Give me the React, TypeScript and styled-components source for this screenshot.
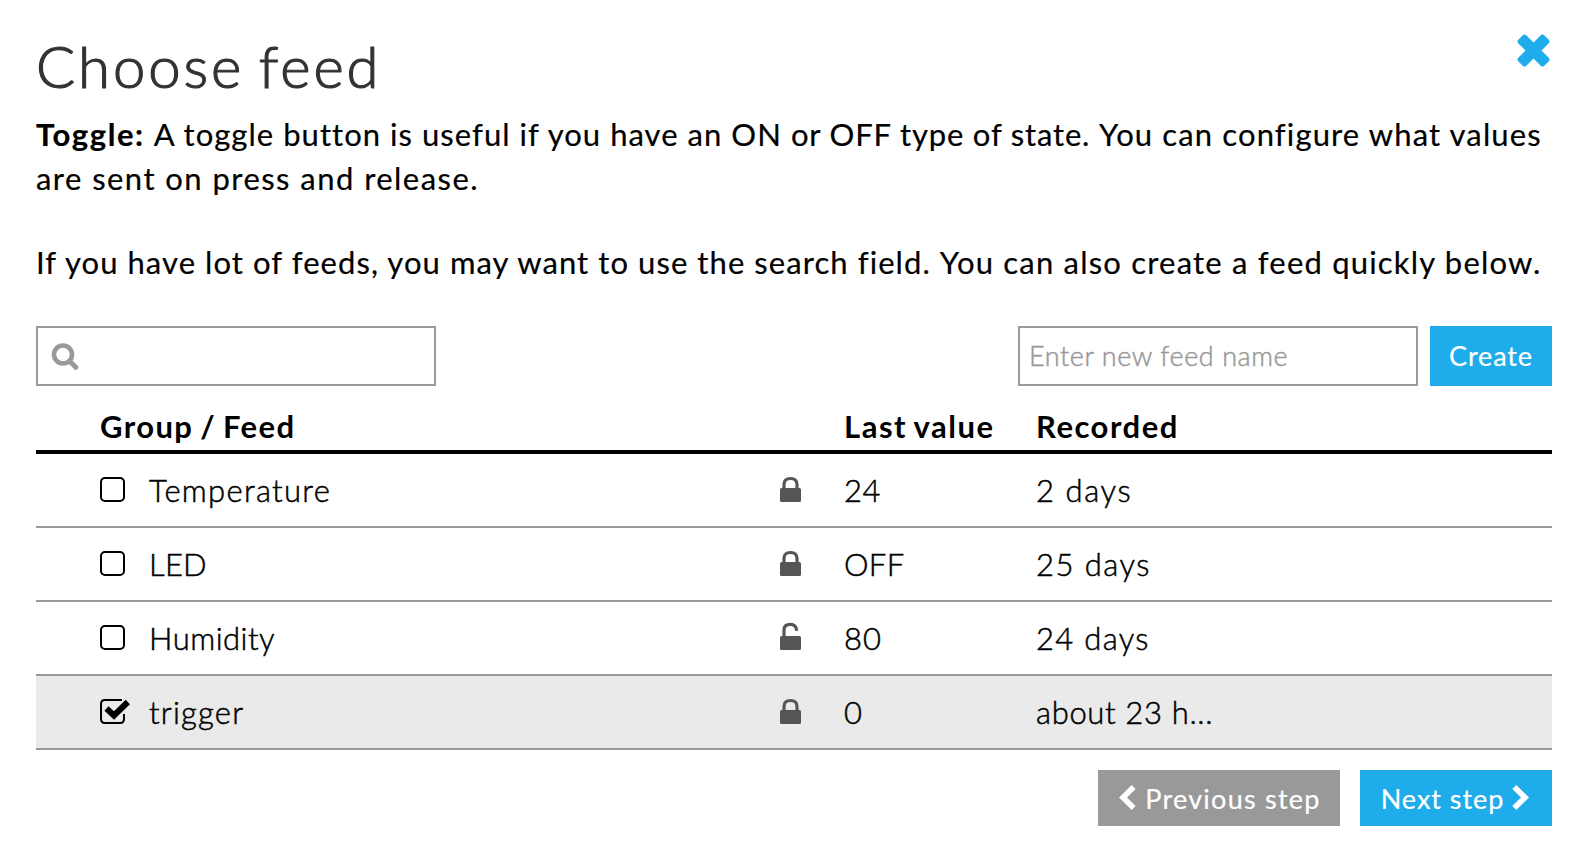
import React from "react";
import styled, { createGlobalStyle, css } from "styled-components";

const blue = "#1faceb";
const gray = "#999";

const GlobalStyle = createGlobalStyle`
  * { box-sizing: border-box; }
  body { margin: 0; background: #fff; color: #000; font-family: Lato, "Liberation Sans", sans-serif; }
`;

const Dialog = styled.main`
  width: 1582px;
  height: 858px;
  padding: 34px 30px 0 36px;
  overflow: hidden;
`;

const Header = styled.header`
  display: flex;
  justify-content: space-between;
  align-items: flex-start;
  height: 78px;
`;

const Title = styled.h1`
  margin: 1px 0 0;
  font-size: 58px;
  line-height: 62px;
  font-weight: 300;
  letter-spacing: 2.9px;
  word-spacing: -4px;
  color: #333;
  -webkit-text-stroke: 1.2px #333;
`;

const CloseButton = styled.button`
  display: flex;
  margin: 0 2px 0 0;
  padding: 0;
  border: 0;
  background: none;
  color: ${blue};
`;

const Content = styled.div`
  width: 1516px;
`;

const Paragraph = styled.p`
  margin: 0 0 40px;
  font-size: 31px;
  line-height: 44px;
  white-space: nowrap;
  -webkit-text-stroke: 0.2px #000;
`;

const Spaced = styled.span<{ $tracking: number }>`
  letter-spacing: ${(p) => p.$tracking}px;
`;

const Term = styled.strong`
  margin-right: 1px;
  font-weight: 700;
  letter-spacing: 1.6px;
`;

const Toolbar = styled.div`
  display: flex;
  align-items: stretch;
  height: 60px;
  margin-top: 42px;
`;

const Field = styled.label`
  display: flex;
  align-items: center;
  width: 400px;
  border: 2px solid ${gray};
  color: ${gray};
`;

const SearchField = styled(Field)`
  padding-left: 13px;
  margin-right: auto;
`;

const Input = styled.input`
  flex: 1;
  min-width: 0;
  height: 100%;
  padding: 0 9px 1px;
  border: 0;
  outline: 0;
  background: transparent;
  font: 300 27px Lato, sans-serif;
  letter-spacing: 0.56px;
  &::placeholder { color: ${gray}; opacity: 1; -webkit-text-stroke: 0.5px ${gray}; }
`;

const Button = styled.button<{ $muted?: boolean }>`
  display: flex;
  align-items: center;
  justify-content: center;
  padding: 0;
  border: 0;
  background: ${(p) => (p.$muted ? gray : blue)};
  color: #fff;
  font: 400 27px Lato, sans-serif;
  white-space: nowrap;
  -webkit-text-stroke: 0.2px #fff;
`;

const CreateButton = styled(Button)`
  width: 122px;
  margin-left: 12px;
  padding-bottom: 1px;
  letter-spacing: 0.86px;
`;

const columns = css`
  display: grid;
  grid-template-columns: 64px 49px 631px 64px 192px 1fr;
  align-items: center;
`;

const TableHead = styled.div`
  ${columns}
  height: 53px;
  margin-top: 15px;
  padding-top: 2px;
  border-bottom: 4px solid #000;
  font-size: 31px;
  line-height: 47px;
  font-weight: 700;
`;

const HeadCell = styled.div<{ $column: string; $tracking: number }>`
  grid-column: ${(p) => p.$column};
  letter-spacing: ${(p) => p.$tracking}px;
  word-spacing: -2px;
  white-space: nowrap;
`;

const Row = styled.div<{ $selected?: boolean }>`
  ${columns}
  height: 74px;
  border-bottom: 2px solid ${gray};
  background: ${(p) => (p.$selected ? "#eaeaea" : "#fff")};
  font-size: 31px;
  line-height: 72px;
  font-weight: 300;
  -webkit-text-stroke: 0.5px #000;
`;

const CheckCell = styled.div`
  grid-column: 2;
  display: flex;
`;

const LockCell = styled.div`
  display: flex;
  margin-bottom: 4px;
  color: #555;
`;

const Cell = styled.div<{ $tracking: number }>`
  letter-spacing: ${(p) => p.$tracking}px;
  white-space: nowrap;
`;

const Footer = styled.footer`
  display: flex;
  justify-content: flex-end;
  gap: 20px;
  height: 56px;
  margin-top: 20px;
`;

const PreviousButton = styled(Button)`
  width: 242px;
  padding-left: 2px;
  gap: 9px;
  letter-spacing: 1.25px;
`;

const NextButton = styled(Button)`
  width: 192px;
  padding-right: 2px;
  gap: 8px;
  letter-spacing: 0.95px;
`;

const CloseIcon = () => (
  <svg width="33" height="33" viewBox="0 0 33 33" fill="currentColor">
    <path d="M6 1Q7.500 0 9 1L16.500 8.500L24 1Q25.500 0 27 1L32 6Q33 7.500 32 9L24.500 16.500L32 24Q33 25.500 32 27L27 32Q25.500 33 24 32L16.500 24.500L9 32Q7.500 33 6 32L1 27Q0 25.500 1 24L8.500 16.500L1 9Q0 7.500 1 6Z" />
  </svg>
);

const SearchIcon = () => (
  <svg width="28" height="28" viewBox="0 0 28 28" fill="none" stroke="currentColor">
    <circle cx="12" cy="12.500" r="9" strokeWidth="4.600" />
    <path d="M19 19.500L24.800 25.300" strokeWidth="5" strokeLinecap="round" />
  </svg>
);

const Checkbox = ({ checked }: { checked?: boolean }) => (
  <svg width="30" height="26" viewBox="0 0 30 26" fill="none" stroke="#000" strokeWidth="2">
    {checked ? (
      <>
        <path d="M22 1H5Q1 1 1 5V20Q1 24 5 24H20Q24 24 24 20V15" />
        <path d="M6.500 9.500L14 16.500L27.800 3" strokeWidth="6" />
      </>
    ) : (
      <rect x="1" y="1" width="23" height="23" rx="4" />
    )}
  </svg>
);

const LockIcon = ({ open }: { open?: boolean }) => (
  <svg width="21" height="28" viewBox="0 0 21 28">
    <rect y="14" width="21" height="14" rx="1.500" fill="currentColor" />
    <path
      d={open ? "M4 14V8Q4 2.300 10.500 2.300Q16 2.300 16.800 8.800" : "M4 15V10.500Q4 4.500 10.500 4.500Q17 4.500 17 10.500V15"}
      fill="none"
      stroke="currentColor"
      strokeWidth="3.200"
    />
  </svg>
);

const ChevronIcon = ({ right }: { right?: boolean }) => (
  <svg width="17" height="28" viewBox="0 0 17 26" fill="none" stroke="#fff" strokeWidth="5.600">
    <path d={right ? "M2.300 2L13 12.500L2.300 23" : "M14.700 2L4 12.500L14.700 23"} />
  </svg>
);

type Feed = {
  name: string;
  value: string;
  recorded: string;
  tracking: [number, number, number];
  open?: boolean;
  selected?: boolean;
};

const feeds: Feed[] = [
  { name: "Temperature", value: "24", recorded: "2 days", tracking: [1.3, 0.5, 1.6] },
  { name: "LED", value: "OFF", recorded: "25 days", tracking: [0.2, 0.3, 1.45] },
  { name: "Humidity", value: "80", recorded: "24 days", tracking: [0.5, 1, 1.3], open: true },
  { name: "trigger", value: "0", recorded: "about 23 h...", tracking: [1.2, 0, 0.65], selected: true },
];

export default function App() {
  return (
    <Dialog>
      <GlobalStyle />
      <Header>
        <Title>Choose feed</Title>
        <CloseButton aria-label="Close"><CloseIcon /></CloseButton>
      </Header>
      <Content>
        <Paragraph>
          <Term>Toggle:</Term>{" "}
          <Spaced $tracking={1.04}>A toggle button is useful if you have an ON </Spaced>
          <Spaced $tracking={0.83}>or OFF type of state. </Spaced>
          <Spaced $tracking={1.13}>You can configure what values</Spaced>
          <br />
          <Spaced $tracking={1.45}>are sent on press and release.</Spaced>
        </Paragraph>
        <Paragraph>
          <Spaced $tracking={1.07}>
            If you have lot of feeds, you may want to use the search field.{" "}
          </Spaced>
          <Spaced $tracking={1.2}>You can also create a feed quickly below.</Spaced>
        </Paragraph>
        <Toolbar>
          <SearchField>
            <SearchIcon />
            <Input aria-label="Search feeds" />
          </SearchField>
          <Field>
            <Input placeholder="Enter new feed name" />
          </Field>
          <CreateButton>Create</CreateButton>
        </Toolbar>
        <TableHead>
          <HeadCell $column="2 / 4" $tracking={1.4}>Group / Feed</HeadCell>
          <HeadCell $column="5" $tracking={1.54}>Last value</HeadCell>
          <HeadCell $column="6" $tracking={1.5}>Recorded</HeadCell>
        </TableHead>
        {feeds.map((feed) => (
          <Row key={feed.name} $selected={feed.selected}>
            <CheckCell><Checkbox checked={feed.selected} /></CheckCell>
            <Cell $tracking={feed.tracking[0]}>{feed.name}</Cell>
            <LockCell><LockIcon open={feed.open} /></LockCell>
            <Cell $tracking={feed.tracking[1]}>{feed.value}</Cell>
            <Cell $tracking={feed.tracking[2]}>{feed.recorded}</Cell>
          </Row>
        ))}
        <Footer>
          <PreviousButton $muted><ChevronIcon />Previous step</PreviousButton>
          <NextButton>Next step<ChevronIcon right /></NextButton>
        </Footer>
      </Content>
    </Dialog>
  );
}
